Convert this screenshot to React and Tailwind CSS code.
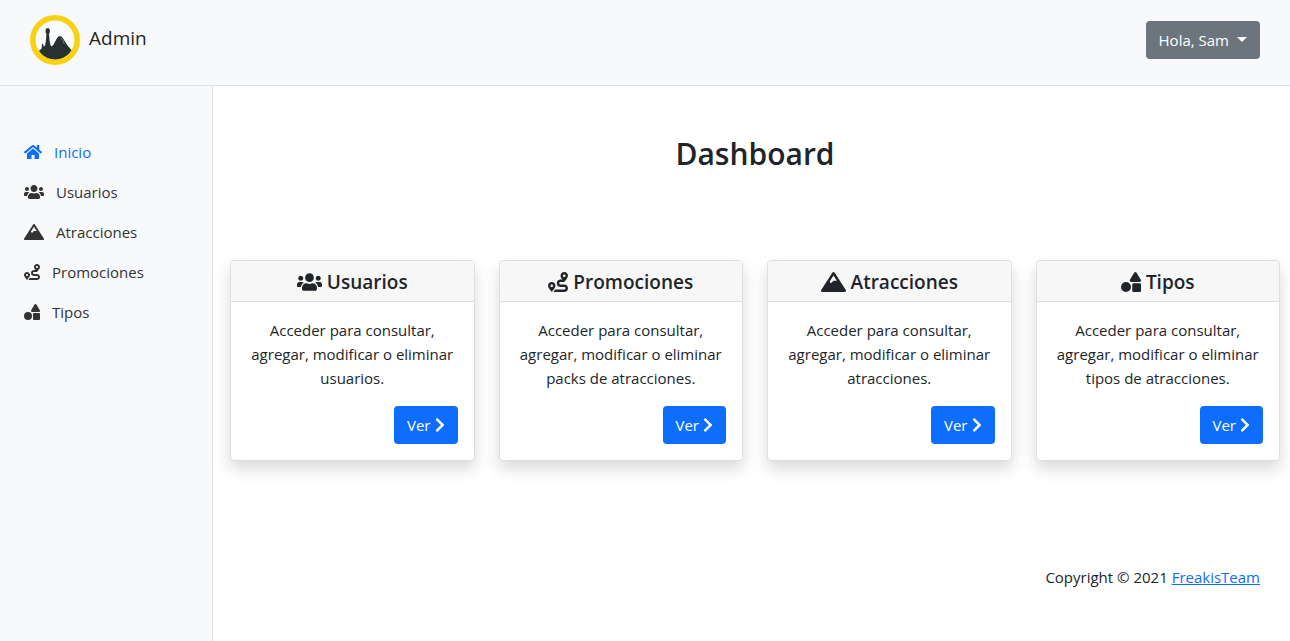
import {
  FaHome,
  FaUsers,
  FaMountain,
  FaRoute,
  FaShapes,
  FaChevronRight,
} from "react-icons/fa";

const links = [
  { label: "Inicio", Icon: FaHome, width: "w-[18px]", active: true },
  { label: "Usuarios", Icon: FaUsers, width: "w-5" },
  { label: "Atracciones", Icon: FaMountain, width: "w-5" },
  { label: "Promociones", Icon: FaRoute, width: "w-4" },
  { label: "Tipos", Icon: FaShapes, width: "w-4" },
];

const cards = [
  { title: "Usuarios", Icon: FaUsers, width: "w-[25px]", target: "usuarios" },
  { title: "Promociones", Icon: FaRoute, width: "w-5", target: "packs de atracciones" },
  { title: "Atracciones", Icon: FaMountain, width: "w-[25px]", target: "atracciones" },
  { title: "Tipos", Icon: FaShapes, width: "w-5", target: "tipos de atracciones" },
];

function Logo() {
  return (
    <svg viewBox="0 0 50 50" className="size-[50px]" aria-hidden="true">
      <circle cx="25" cy="25" r="22.3" fill="#fafbfc" />
      <path
        d="M8.8 36 11.6 33.4 12.1 28.8 13.1 28.8 13.6 31.6 15 30.8 15.9 26 16.4 18.6 15.6 17.6V14.4L16.6 13.2H18.8L19.8 14.4V17.6L19 18.6 19.6 26 20.6 30.6 21.8 31.6 23.6 29.6 27.2 22.8 28.8 21.2H31.2L33 23.2 37 29.8 42 35.8A19.6 19.6 0 0 1 25 45 19.6 19.6 0 0 1 8.8 36Z"
        fill="#27312f"
      />
      <path d="m31 22.8 1.9 2.6 1.4 3.6" fill="none" stroke="#87908e" strokeWidth="0.8" />
      <circle cx="25" cy="25" r="22.2" fill="none" stroke="#f8d115" strokeWidth="5.6" />
    </svg>
  );
}

function Card({ title, Icon, width, target }) {
  return (
    <article className="overflow-hidden rounded border border-[#dfdfdf] bg-white shadow-[0_8px_16px_rgba(0,0,0,0.15)]">
      <h2 className="flex items-center justify-center gap-[5px] border-b border-[#dfdfdf] bg-[#f7f7f7] pt-[9px] pb-[7px] text-[19px] leading-6 font-semibold">
        <Icon className={`${width} h-5 shrink-0`} />
        {title}
      </h2>
      <div className="p-4">
        <p className="mb-4 text-center leading-6">
          Acceder para consultar, agregar, modificar o eliminar {target}.
        </p>
        <div className="flex justify-end">
          <button
            type="button"
            className="flex h-[38px] items-center gap-1 rounded bg-[#0d6efd] px-[13px] text-white"
          >
            Ver
            <FaChevronRight className="h-4 w-[10px]" />
          </button>
        </div>
      </div>
    </article>
  );
}

export default function App() {
  return (
    <div className="flex min-h-screen flex-col bg-white font-['Segoe_UI','Open_Sans',sans-serif] text-[15px] text-[#212529]">
      <header className="flex items-center justify-between border-b border-[#dee2e6] bg-[#f8f9fa] px-[30px] pt-[15px] pb-5">
        <a href="#inicio" className="flex items-center gap-[9px] text-[19px]">
          <Logo />
          <span className="pb-1">Admin</span>
        </a>
        <button
          type="button"
          className="flex h-[38px] items-center gap-2 rounded bg-[#6c757d] px-[13px] text-white"
        >
          Hola, Sam
          <svg viewBox="0 0 10 5" className="mb-[2px] h-[5px] w-[10px]" aria-hidden="true">
            <path d="M0 0h10L5 5Z" fill="currentColor" />
          </svg>
        </button>
      </header>

      <div className="flex grow">
        <aside className="w-[213px] shrink-0 border-r border-[#dee2e6] bg-[#f8f9fa] pt-[46px]">
          <nav>
            <ul>
              {links.map(({ label, Icon, width, active }) => (
                <li key={label}>
                  <a
                    href={`#${label.toLowerCase()}`}
                    className={`flex h-10 items-center gap-3 px-6 ${active ? "text-[#0d6efd]" : "text-[#333333]"}`}
                  >
                    <Icon className={`${width} h-4 shrink-0`} />
                    {label}
                  </a>
                </li>
              ))}
            </ul>
          </nav>
        </aside>

        <div className="min-w-0 grow pt-12 pr-[10px] pl-[17px]">
          <main>
            <h1 className="text-center text-[30px] leading-10 font-semibold">Dashboard</h1>
            <div className="mt-[86px] grid grid-cols-4 gap-6">
              {cards.map((card) => (
                <Card key={card.title} {...card} />
              ))}
            </div>
          </main>
          <footer className="mt-[104px] pr-5 text-right leading-6">
            Copyright © 2021{" "}
            <a href="#freakisteam" className="text-[#0d6efd] underline">
              FreakisTeam
            </a>
          </footer>
        </div>
      </div>
    </div>
  );
}
